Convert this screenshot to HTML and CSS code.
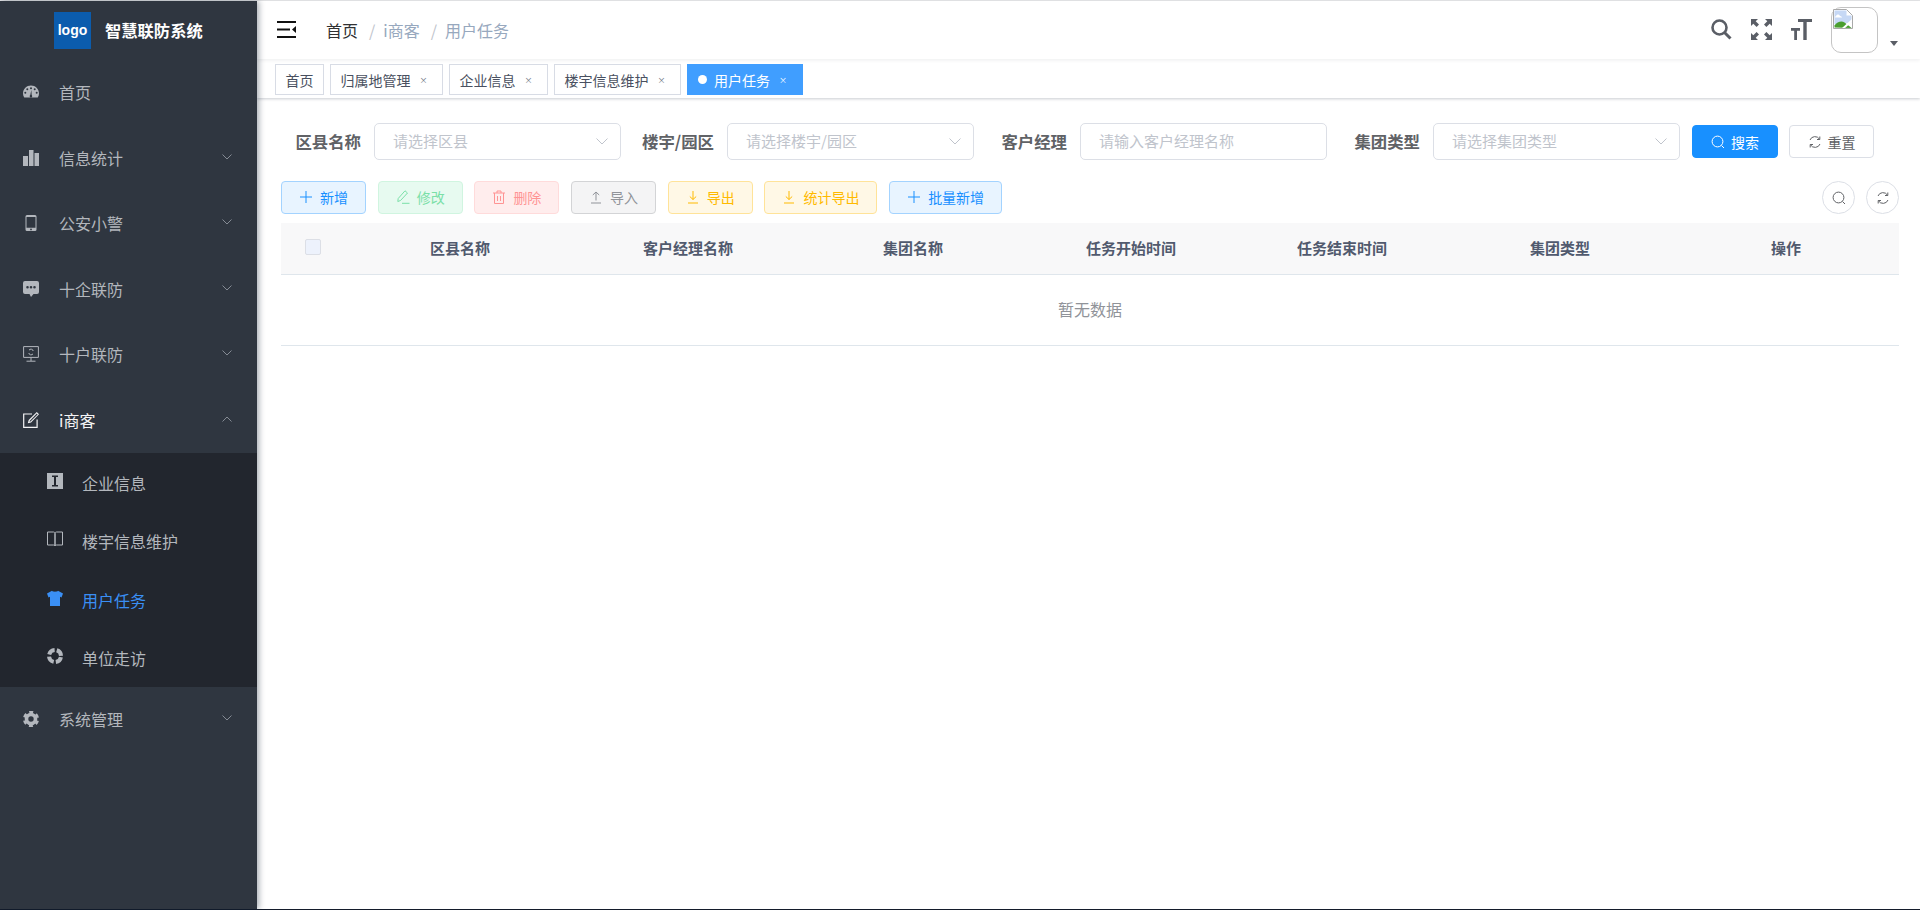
FILE: index.html
```html
<!DOCTYPE html>
<html lang="zh-CN">
<head>
    <meta charset="UTF-8">
    <meta name="viewport" content="width=device-width, initial-scale=1.0">
    <title>智慧联防系统</title>
    <link rel="stylesheet" href="styles.css">
</head>
<body>

<div class="app">
    <aside class="sidebar">
        <div class="brand">
            <div class="brand-logo">logo</div>
            <div class="brand-title">智慧联防系统</div>
        </div>

        <div class="menu-item">
            <svg class="menu-icon" viewBox="0 0 16 16"><path fill="currentColor" fill-rule="evenodd" d="M8 1.500C3.600 1.500 0 5 0 9.400c0 1.500.4 2.800 1.100 3.900.1.200.3.300.5.300h12.800c.2 0 .4-.1.500-.3.700-1.100 1.100-2.400 1.100-3.900C16 5 12.400 1.500 8 1.500zM2.300 9.800a1 1 0 1 1 0-2 1 1 0 0 1 0 2zm2-3.500a1 1 0 1 1 0-2 1 1 0 0 1 0 2zm3-1.300a1 1 0 1 1 1.400 0 1 1 0 0 1-1.400 0zm1.900 7.400a1.300 1.300 0 0 1-2.500 0c-.1-.6.200-1.100.6-1.300L8.300 6l.4 5.100c.3.200.5.700.5 1.300zm2.500-6.100a1 1 0 1 1 0-2 1 1 0 0 1 0 2zm2 3.500a1 1 0 1 1 0-2 1 1 0 0 1 0 2z"/></svg>
            <span>首页</span>
        </div>
        <div class="menu-item">
            <svg class="menu-icon" viewBox="0 0 16 16"><path fill="currentColor" d="M0 6h5v10H0zM6 0h4.500v16H6zM11.500 3H16v13h-4.500z"/></svg>
            <span>信息统计</span>
            <svg class="chevron" viewBox="0 0 10 6"><path d="M.5.5 5 5 9.500.5"/></svg>
        </div>
        <div class="menu-item">
            <svg class="menu-icon" viewBox="0 0 16 16"><path fill="currentColor" fill-rule="evenodd" d="M4 0h8a1.500 1.500 0 0 1 1.500 1.500v13A1.500 1.500 0 0 1 12 16H4a1.500 1.500 0 0 1-1.500-1.500v-13A1.500 1.500 0 0 1 4 0zm-.5 2v10.800h9V2zM8 13.500a.9.900 0 1 0 0 1.800.9.900 0 0 0 0-1.800z"/></svg>
            <span>公安小警</span>
            <svg class="chevron" viewBox="0 0 10 6"><path d="M.5.5 5 5 9.500.5"/></svg>
        </div>
        <div class="menu-item">
            <svg class="menu-icon" viewBox="0 0 16 16"><path fill="currentColor" fill-rule="evenodd" d="M2 0h12a2 2 0 0 1 2 2v9a2 2 0 0 1-2 2h-3.500L8 16l-1.500-3H2a2 2 0 0 1-2-2V2a2 2 0 0 1 2-2zm2.500 5a1.300 1.300 0 1 0 0 2.600 1.300 1.300 0 0 0 0-2.600zM8 5a1.300 1.300 0 1 0 0 2.600A1.300 1.300 0 0 0 8 5zm3.500 0a1.300 1.300 0 1 0 0 2.600 1.300 1.300 0 0 0 0-2.600z"/></svg>
            <span>十企联防</span>
            <svg class="chevron" viewBox="0 0 10 6"><path d="M.5.5 5 5 9.500.5"/></svg>
        </div>
        <div class="menu-item">
            <svg class="menu-icon" viewBox="0 0 16 16"><path fill="none" stroke="currentColor" d="M.6.600h14.800v10.800H.6zM8 11.500v3.500M3.500 15.200h9"/><path fill="none" stroke="currentColor" d="M10.200 5a2.300 2.300 0 0 0-4.200-.8M5.800 7a2.300 2.300 0 0 0 4.200.8"/></svg>
            <span>十户联防</span>
            <svg class="chevron" viewBox="0 0 10 6"><path d="M.5.5 5 5 9.500.5"/></svg>
        </div>
        <div class="menu-item menu-item-open">
            <svg class="menu-icon" viewBox="0 0 16 16"><path fill="none" stroke="currentColor" stroke-width="1.200" d="M9 2H.7v13.300h13.400V7.500"/><path fill="currentColor" d="M13.800 0 16 2.200 8 10.400l-3.200.8.900-3.200z"/><path fill="#2f3640" d="M13.800 1.600l.8.800-7.100 7.100-1 .3.300-1z"/></svg>
            <span>i商客</span>
            <svg class="chevron" viewBox="0 0 10 6"><path d="M.5 5.500 5 1 9.500 5.500"/></svg>
        </div>

        <div class="submenu">
            <div class="submenu-item">
                <svg class="menu-icon" viewBox="0 0 16 16"><path fill="currentColor" fill-rule="evenodd" d="M0 0h16v16H0zM5 2.500v1.500h2v8H5v1.500h6V12H9V4h2V2.500z"/></svg>
                <span>企业信息</span>
            </div>
            <div class="submenu-item">
                <svg class="menu-icon" viewBox="0 0 16 16"><path fill="none" stroke="currentColor" d="M.5 1h6c.9 0 1.500.6 1.500 1.500V15c0-.6-.6-1-1.500-1h-6zM15.500 1h-6C8.600 1 8 1.600 8 2.500V15c0-.6.600-1 1.500-1h6z"/></svg>
                <span>楼宇信息维护</span>
            </div>
            <div class="submenu-item submenu-item-active">
                <svg class="menu-icon" viewBox="0 0 16 16"><path fill="currentColor" d="M5 .8C6 2 10 2 11 .8L16 3.500 14.500 7.500 13 6.700V16H3V6.700L1.500 7.500 0 3.500z"/></svg>
                <span>用户任务</span>
            </div>
            <div class="submenu-item">
                <svg class="menu-icon" viewBox="0 0 16 16"><circle cx="8" cy="8" r="6" fill="none" stroke="currentColor" stroke-width="4" stroke-dasharray="7.200 2.225" stroke-dashoffset="-1.110"/></svg>
                <span>单位走访</span>
            </div>
        </div>

        <div class="menu-item">
            <svg class="menu-icon" viewBox="0 0 16 16"><g fill="none" stroke="currentColor"><circle cx="8" cy="8" r="4.500" stroke-width="3.600"/><circle cx="8" cy="8" r="6.700" stroke-width="2.800" stroke-dasharray="3.800 3.216" stroke-dashoffset="-1.600"/></g></svg>
            <span>系统管理</span>
            <svg class="chevron" viewBox="0 0 10 6"><path d="M.5.5 5 5 9.500.5"/></svg>
        </div>
    </aside>

    <main class="main">
        <header class="navbar">
            <svg class="hamburger" viewBox="0 0 19 17"><path fill="#111" d="M0 0h19v2H0zM0 7.500h13v2H0zM0 15h19v2H0zM19 5v7l-4-3.500z"/></svg>
            <nav class="breadcrumb">
                <span class="crumb-home">首页</span>
                <span class="crumb-sep">/</span>
                <span>i商客</span>
                <span class="crumb-sep">/</span>
                <span>用户任务</span>
            </nav>
            <div class="navbar-right">
                <svg class="nav-icon" viewBox="0 0 21 21"><circle cx="8.500" cy="8.500" r="7" fill="none" stroke="#5a5e66" stroke-width="2.600"/><path d="M13.500 13.500 19.500 19.500" stroke="#5a5e66" stroke-width="3" fill="none"/></svg>
                <svg class="nav-icon" viewBox="0 0 21 21"><path fill="#5a5e66" d="M0 0h7L4.700 2.300 8 5.600 5.600 8 2.300 4.700 0 7zM21 0v7l-2.300-2.300L15.400 8 13 5.600l3.300-3.300L14 0zM0 21v-7l2.300 2.300L5.600 13 8 15.400l-3.300 3.300L7 21zM21 21h-7l2.300-2.300-3.300-3.300 2.400-2.400 3.300 3.300L21 14z"/></svg>
                <svg class="nav-icon" viewBox="0 0 21 21"><path fill="#5a5e66" d="M7 0h14v3h-5.300v18h-3.400V3H7zM0 9h9v2.800H6V21H3.200v-9.200H0z"/></svg>
                <div class="avatar">
                    <svg class="broken-img" viewBox="0 0 20 20">
                        <path fill="#fff" stroke="#a9a9a9" d="M.5.5h13l6 6v13H.5z"/>
                        <path fill="#c6d8f5" d="M1.500 1.500h12v5h5v7l-17 2z"/>
                        <path fill="#fff" d="M3 7c1-2 3-2 4 0 1 .2 2 .7 2 1.500H2C2 7.800 2.400 7.300 3 7z"/>
                        <path fill="#4a9e2f" d="M1.500 18.500v-2c2.500-3.500 7-5 10-3l4 3 3 2.500z"/>
                        <path fill="#fff" d="m9 19 10-9v3l-7 6z"/>
                    </svg>
                </div>
                <span class="avatar-caret"></span>
            </div>
        </header>

        <div class="tags-bar">
            <span class="tag">首页</span>
            <span class="tag">归属地管理<i class="tag-close">×</i></span>
            <span class="tag">企业信息<i class="tag-close">×</i></span>
            <span class="tag">楼宇信息维护<i class="tag-close">×</i></span>
            <span class="tag tag-active"><i class="tag-dot"></i>用户任务<i class="tag-close">×</i></span>
        </div>

        <form class="filter">
            <label class="filter-label">区县名称</label>
            <div class="field">
                <span class="placeholder">请选择区县</span>
                <svg class="field-arrow" viewBox="0 0 12 7"><path d="M.5.5 6 6 11.500.5"/></svg>
            </div>
            <label class="filter-label">楼宇/园区</label>
            <div class="field">
                <span class="placeholder">请选择楼宇/园区</span>
                <svg class="field-arrow" viewBox="0 0 12 7"><path d="M.5.5 6 6 11.500.5"/></svg>
            </div>
            <label class="filter-label">客户经理</label>
            <div class="field">
                <span class="placeholder">请输入客户经理名称</span>
            </div>
            <label class="filter-label">集团类型</label>
            <div class="field">
                <span class="placeholder">请选择集团类型</span>
                <svg class="field-arrow" viewBox="0 0 12 7"><path d="M.5.5 6 6 11.500.5"/></svg>
            </div>
            <button type="button" class="btn-search">
                <svg class="btn-icon" viewBox="0 0 14 14"><circle cx="6.500" cy="6.500" r="5.400"/><path d="m10.500 10.500 2.500 2.500"/></svg>
                搜索
            </button>
            <button type="button" class="btn-reset">
                <svg class="btn-icon" viewBox="0 0 14 14"><path d="M2 5a5.300 5.300 0 0 1 9.500-.8M12 9a5.300 5.300 0 0 1-9.500.8"/><path d="M11.800 1.500v3H9M2.200 12.500v-3H5"/></svg>
                重置
            </button>
        </form>

        <div class="toolbar">
            <button type="button" class="btn btn-primary">
                <svg class="btn-icon" viewBox="0 0 14 14"><path d="M7 1v12M1 7h12"/></svg>新增
            </button>
            <button type="button" class="btn btn-success">
                <svg class="btn-icon" viewBox="0 0 14 14"><path d="M9 .8 11.500 3 4.500 10.500 1.800 11.500 2.200 8.500zM6 13.300h7.500"/></svg>修改
            </button>
            <button type="button" class="btn btn-danger">
                <svg class="btn-icon" viewBox="0 0 14 14"><path d="M1 3h12M5 3V1h4v2M2.500 3v10.500h9V3M5.500 6v5M8.500 6v5"/></svg>删除
            </button>
            <button type="button" class="btn btn-info">
                <svg class="btn-icon" viewBox="0 0 14 14"><path d="M2 13h10M7 10.500V2M3.800 5 7 2l3.200 3"/></svg>导入
            </button>
            <button type="button" class="btn btn-warning">
                <svg class="btn-icon" viewBox="0 0 14 14"><path d="M2 13h10M7 1v8.500M3.800 6.500 7 9.500l3.200-3"/></svg>导出
            </button>
            <button type="button" class="btn btn-warning btn-wide">
                <svg class="btn-icon" viewBox="0 0 14 14"><path d="M2 13h10M7 1v8.500M3.800 6.500 7 9.500l3.200-3"/></svg>统计导出
            </button>
            <button type="button" class="btn btn-primary btn-wide">
                <svg class="btn-icon" viewBox="0 0 14 14"><path d="M7 1v12M1 7h12"/></svg>批量新增
            </button>
            <div class="toolbar-right">
                <button type="button" class="btn-circle">
                    <svg class="btn-icon" viewBox="0 0 14 14"><circle cx="6.500" cy="6.500" r="5.400"/><path d="m10.500 10.500 2.500 2.500"/></svg>
                </button>
                <button type="button" class="btn-circle">
                    <svg class="btn-icon" viewBox="0 0 14 14"><path d="M2 5a5.300 5.300 0 0 1 9.500-.8M12 9a5.300 5.300 0 0 1-9.500.8"/><path d="M11.800 1.500v3H9M2.200 12.500v-3H5"/></svg>
                </button>
            </div>
        </div>

        <table class="data-table">
            <thead>
                <tr>
                    <th><span class="checkbox"></span></th>
                    <th>区县名称</th>
                    <th>客户经理名称</th>
                    <th>集团名称</th>
                    <th>任务开始时间</th>
                    <th>任务结束时间</th>
                    <th>集团类型</th>
                    <th>操作</th>
                </tr>
            </thead>
            <tbody>
                <tr>
                    <td class="empty" colspan="8">暂无数据</td>
                </tr>
            </tbody>
        </table>
    </main>
</div>

</body>
</html>
```

FILE: styles.css
```css
* {
    box-sizing: border-box;
}
html, body {
    margin: 0;
    padding: 0;
    height: 100%;
    overflow: hidden;
}
body {
    font-family: "Noto Sans CJK SC", "Liberation Sans", sans-serif;
    background-color: #ffffff;
    color: #606266;
}
.app {
    display: flex;
    height: 910px;
    border-top: 1px solid #e3e4e6;
    border-bottom: 1px solid #141c2b;
}

/* sidebar */
.sidebar {
    width: 257px;
    flex-shrink: 0;
    background-color: #2f3640;
    box-shadow: 2px 0 6px rgba(0, 21, 41, 0.35);
    position: relative;
    z-index: 2;
}
.brand {
    height: 58.5px;
    display: flex;
    align-items: center;
    padding: 0 0 0 54px;
    gap: 14px;
}
.brand-logo {
    width: 37px;
    height: 37px;
    background-color: #0b5cad;
    color: #ffffff;
    font-family: "Liberation Sans", sans-serif;
    font-size: 14px;
    font-weight: bold;
    line-height: 36px;
    text-align: center;
}
.brand-title {
    color: #ffffff;
    font-size: 16.3px;
    font-weight: bold;
}
.menu-item {
    height: 65.5px;
    display: flex;
    align-items: center;
    padding-left: 23px;
    color: #b3b7bd;
    font-size: 16px;
    position: relative;
}
.menu-icon {
    width: 16px;
    height: 16px;
    flex-shrink: 0;
    margin-right: 20px;
}
.chevron {
    position: absolute;
    right: 25px;
    top: 50%;
    width: 10px;
    height: 6px;
    margin-top: -4px;
    fill: none;
    stroke: #858b94;
}
.menu-item-open {
    color: #f4f4f5;
}
.submenu {
    background-color: #22262e;
}
.submenu-item {
    height: 58.5px;
    display: flex;
    align-items: center;
    padding: 2px 0 0 47px;
    color: #b3b7bd;
    font-size: 16px;
}
.submenu-item .menu-icon {
    margin-right: 19px;
    margin-top: -4px;
}
.submenu-item-active {
    color: #3a8ff5;
}

/* top bar */
.main {
    flex: 1;
    min-width: 0;
}
.navbar {
    height: 58px;
    display: flex;
    align-items: center;
    padding-left: 20px;
    background-color: #ffffff;
    box-shadow: 0 1px 4px rgba(0, 21, 41, 0.08);
    position: relative;
}
.hamburger {
    width: 19px;
    height: 17px;
    margin-top: -2px;
}
.breadcrumb {
    display: flex;
    margin-left: 30px;
    font-size: 16px;
    color: #97a8be;
}
.crumb-home {
    color: #303133;
}
.crumb-sep {
    color: #c0c4cc;
    margin: 0 8px 0 11px;
}
.navbar-right {
    display: flex;
    align-items: center;
    margin-left: auto;
    padding-right: 22px;
}
.nav-icon {
    width: 21px;
    height: 21px;
    margin-right: 19px;
    margin-top: -1px;
}
.avatar {
    width: 47px;
    height: 46px;
    border: 1px solid #c4c4c4;
    border-radius: 10px;
    padding: 1px;
}
.broken-img {
    display: block;
    width: 20px;
    height: 20px;
}
.avatar-caret {
    width: 0;
    height: 0;
    border-left: 4px solid transparent;
    border-right: 4px solid transparent;
    border-top: 5px solid #5a5e66;
    margin: 26px 0 0 12px;
}

/* tags */
.tags-bar {
    height: 39px;
    display: flex;
    align-items: flex-start;
    gap: 6px;
    padding: 5px 0 0 18px;
    box-shadow: 0 1px 3px rgba(0, 21, 41, 0.2), 0 0 3px rgba(0, 0, 0, 0.04);
    background-color: #ffffff;
}
.tag {
    height: 31px;
    display: flex;
    align-items: center;
    padding: 0 9.5px;
    border: 1px solid #d8dce5;
    background-color: #ffffff;
    color: #495060;
    font-size: 14px;
}
.tag-close {
    width: 7px;
    margin: 0 6px 0 9px;
    font-style: normal;
    font-size: 8px;
    text-align: center;
    color: #6b7280;
}
.tag-active {
    background-color: #409eff;
    border-color: #409eff;
    color: #ffffff;
}
.tag-active .tag-close {
    color: #ffffff;
}
.tag-dot {
    width: 9px;
    height: 9px;
    border-radius: 50%;
    background-color: #ffffff;
    margin-right: 7.5px;
}

/* search form */
.filter {
    display: flex;
    align-items: center;
    padding: 25px 0 0 11px;
}
.filter-label {
    width: 106px;
    padding: 0 13px 2px 0;
    text-align: right;
    font-size: 16.4px;
    font-weight: bold;
    color: #606266;
}
.field {
    width: 247px;
    height: 37px;
    display: flex;
    align-items: center;
    justify-content: space-between;
    padding: 0 12px 0 18px;
    border: 1px solid #dcdfe6;
    border-radius: 5px;
}
.placeholder {
    padding-bottom: 2px;
    color: #c0c4cc;
    font-size: 15px;
}
.field-arrow {
    width: 12px;
    height: 7px;
    fill: none;
    stroke: #c0c4cc;
}
.btn-icon {
    width: 14px;
    height: 14px;
    fill: none;
    stroke: currentColor;
    flex-shrink: 0;
}
.btn-search, .btn-reset {
    height: 33px;
    display: flex;
    align-items: center;
    justify-content: center;
    gap: 6px;
    padding: 0;
    font-family: inherit;
    font-size: 14px;
    border-radius: 4px;
}
.btn-search {
    width: 86px;
    margin-left: 12px;
    background-color: #1890ff;
    border: 1px solid #1890ff;
    color: #ffffff;
}
.btn-reset {
    width: 85px;
    margin-left: 11px;
    background-color: #ffffff;
    border: 1px solid #dcdfe6;
    color: #606266;
}

/* action buttons */
.toolbar {
    display: flex;
    align-items: center;
    gap: 11.7px;
    padding: 21px 21px 0 24px;
}
.btn {
    width: 85px;
    height: 33px;
    display: flex;
    align-items: center;
    justify-content: center;
    gap: 7px;
    padding: 0 0 2px;
    font-family: inherit;
    font-size: 14px;
    border-radius: 4px;
    border: 1px solid;
}
.btn-wide {
    width: 113px;
}
.btn-primary {
    background-color: #e8f4ff;
    border-color: #a3d3ff;
    color: #1890ff;
}
.btn-success {
    background-color: #e7faf0;
    border-color: #d0f5e0;
    color: #7be0a8;
}
.btn-danger {
    background-color: #ffeded;
    border-color: #ffdbdb;
    color: #ff9494;
}
.btn-info {
    background-color: #f4f4f5;
    border-color: #d3d4d6;
    color: #909399;
}
.btn-warning {
    background-color: #fff8e6;
    border-color: #ffe399;
    color: #ffba00;
}
.toolbar-right {
    display: flex;
    gap: 11px;
    margin-left: auto;
}
.btn-circle {
    width: 33px;
    height: 33px;
    display: flex;
    align-items: center;
    justify-content: center;
    padding: 0;
    background-color: #ffffff;
    border: 1px solid #dcdfe6;
    border-radius: 50%;
    color: #606266;
}

/* table */
.data-table {
    width: 1618px;
    margin: 9px 0 0 24px;
    border-collapse: collapse;
    table-layout: fixed;
}
.data-table th {
    height: 51px;
    padding: 0 0 2px;
    background-color: #f8f8f9;
    border-bottom: 1px solid #dfe6ec;
    color: #515a6e;
    font-size: 15px;
    font-weight: bold;
    text-align: center;
}
.data-table th:nth-child(1) { width: 64px; }
.data-table th:nth-child(2) { width: 230px; }
.data-table th:nth-child(3) { width: 226px; }
.data-table th:nth-child(4) { width: 224px; }
.data-table th:nth-child(5) { width: 212px; }
.data-table th:nth-child(6) { width: 210px; }
.data-table th:nth-child(7) { width: 226px; }
.data-table th:nth-child(8) { width: 226px; }
.checkbox {
    display: block;
    width: 16px;
    height: 16px;
    margin: 0 auto;
    background-color: #edf2fc;
    border: 1px solid #dcdfe6;
    border-radius: 2px;
}
.empty {
    height: 71px;
    padding: 0 0 2px;
    text-align: center;
    color: #909399;
    font-size: 16px;
    border-bottom: 1px solid #dfe6ec;
}
```
